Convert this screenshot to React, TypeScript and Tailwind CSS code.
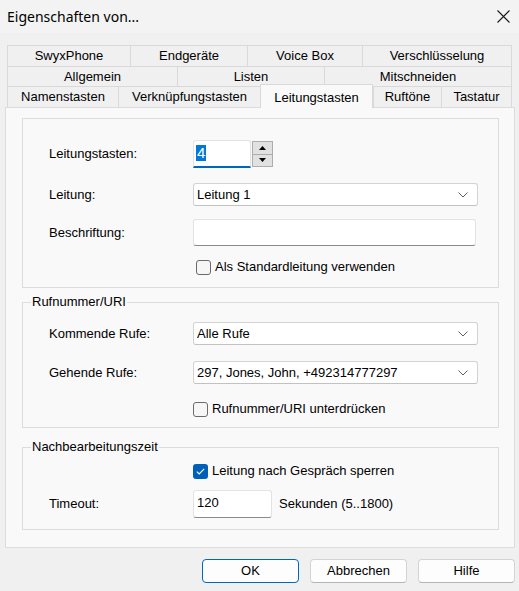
import { ReactNode } from "react";

type Tab = { label: string; width: string; active?: boolean };

const tabRows: { height: string; tabs: Tab[] }[] = [
  {
    height: "h-[21px]",
    tabs: [
      { label: "SwyxPhone", width: "w-[123px]" },
      { label: "Endgeräte", width: "w-[117px]" },
      { label: "Voice Box", width: "w-[115px]" },
      { label: "Verschlüsselung", width: "w-[150px]" },
    ],
  },
  {
    height: "h-[20px]",
    tabs: [
      { label: "Allgemein", width: "w-[170px]" },
      { label: "Listen", width: "w-[147px]" },
      { label: "Mitschneiden", width: "w-[188px]" },
    ],
  },
  {
    height: "h-[21px]",
    tabs: [
      { label: "Namenstasten", width: "w-[111px]" },
      { label: "Verknüpfungstasten", width: "w-[142px]" },
      { label: "Leitungstasten", width: "w-[113px]", active: true },
      { label: "Ruftöne", width: "w-[68px]" },
      { label: "Tastatur", width: "w-[71px]" },
    ],
  },
];

const Chevron = () => (
  <svg width="10" height="6" viewBox="0 0 10 6" fill="none">
    <path d="M0.5 0.5 L5 5 L9.5 0.5" stroke="#606060" strokeWidth="1" />
  </svg>
);

const Dropdown = ({ value, className }: { value: string; className?: string }) => (
  <div
    className={`flex h-[23px] w-[285px] items-center justify-between rounded-[3px] border border-[#d3d3d3] border-b-[#c2c2c2] bg-white pl-[3px] pr-[9px] ${className ?? ""}`}
  >
    <span>{value}</span>
    <Chevron />
  </div>
);

const Checkbox = ({ label, checked, className }: { label: string; checked?: boolean; className?: string }) => (
  <div className={`flex h-[16px] items-center gap-[4px] ${className ?? ""}`}>
    {checked ? (
      <span className="flex h-[15px] w-[15px] items-center justify-center rounded-[3px] bg-[#005fb8]">
        <svg width="9" height="7" viewBox="0 0 9 7" fill="none">
          <path d="M0.8 3.6 L3.2 6 L8.2 0.9" stroke="white" strokeWidth="1.1" />
        </svg>
      </span>
    ) : (
      <span className="h-[15px] w-[15px] rounded-[3px] border border-[#6b6b6b] bg-[#f6f6f6]" />
    )}
    <span>{label}</span>
  </div>
);

const Row = ({ label, children, className }: { label: string; children: ReactNode; className?: string }) => (
  <div className={`flex items-center ${className ?? ""}`}>
    <span className="w-[144px] shrink-0">{label}</span>
    {children}
  </div>
);

const Group = ({ title, children, className }: { title?: string; children: ReactNode; className?: string }) => (
  <div className={`relative ml-[16px] w-[477px] border border-[#dcdcdc] pl-[26px] ${className ?? ""}`}>
    {title && (
      <span className="absolute -top-[9px] left-[8px] bg-[#f9f9f9] px-[1px] leading-[15px]">{title}</span>
    )}
    {children}
  </div>
);

const Button = ({ label, primary }: { label: string; primary?: boolean }) => (
  <div
    className={`flex h-[24px] w-[97px] items-center justify-center rounded-[4px] border bg-[#fdfdfd] ${
      primary ? "border-[#0067c0]" : "border-[#d3d3d3] border-b-[#b5b5b5]"
    }`}
  >
    {label}
  </div>
);

export default function App() {
  return (
    <div className="h-[591px] w-[519px] overflow-hidden bg-[#f0f0f0] font-['Liberation_Sans',Arial,sans-serif] text-[13px] text-black">
      {/* title bar */}
      <div className="flex h-[33px] items-center justify-between bg-[#f3f3f3] pl-[7px] pr-[9px]">
        <span className="font-['Noto_Sans',sans-serif] text-[14px]">Eigenschaften von...</span>
        <svg width="13" height="13" viewBox="0 0 13 13" fill="none">
          <path d="M0.5 0.5 L12.5 12.5 M12.5 0.5 L0.5 12.5" stroke="#1a1a1a" strokeWidth="1.1" />
        </svg>
      </div>

      {/* tab strip */}
      <div className="mt-[12px] px-[7px]">
        {tabRows.map((row, i) => (
          <div key={i} className={`flex items-start ${row.height}`}>
            {row.tabs.map((tab, j) => (
              <div
                key={tab.label}
                className={
                  tab.active
                    ? `relative z-10 -mt-[2px] flex h-[24px] items-start justify-center border-x border-t border-[#d9d9d9] bg-[#f9f9f9] pt-[3px] ${tab.width}`
                    : `flex h-full items-center justify-center border-l border-t border-[#d9d9d9] bg-[#f0f0f0] ${tab.width} ${
                        j === row.tabs.length - 1 ? "border-r" : ""
                      }`
                }
              >
                {tab.label}
              </div>
            ))}
          </div>
        ))}
      </div>

      {/* page */}
      <div className="mx-[5px] w-[510px] border border-[#dcdcdc] bg-[#f9f9f9] pt-[10px] pb-[17px]">
        <Group className="pt-[21px] pb-[12px]">
          <Row label="Leitungstasten:">
            <div className="flex items-center">
              <div className="flex h-[28px] w-[58px] items-center rounded-t-[3px] border border-[#e3e3e3] border-b-2 border-b-[#0067c0] bg-white pb-[2px] pl-[2px]">
                <span className="bg-[#0078d7] px-[1px] text-[15px] leading-[16px] text-white">4</span>
              </div>
              <div className="ml-[1px] flex h-[26px] w-[21px] flex-col border border-[#adadad] bg-[#e1e1e1]">
                <div className="flex flex-1 items-center justify-center border-b border-[#adadad]">
                  <svg width="7" height="4" viewBox="0 0 7 4">
                    <path d="M0 4 L3.5 0 L7 4 Z" fill="#000" />
                  </svg>
                </div>
                <div className="flex flex-1 items-center justify-center">
                  <svg width="7" height="4" viewBox="0 0 7 4">
                    <path d="M0 0 L7 0 L3.5 4 Z" fill="#000" />
                  </svg>
                </div>
              </div>
            </div>
          </Row>
          <Row label="Leitung:" className="mt-[15px]">
            <Dropdown value="Leitung 1" />
          </Row>
          <Row label="Beschriftung:" className="mt-[13px]">
            <div className="h-[27px] w-[283px] rounded-[3px] border border-[#e3e3e3] border-b-[#8a8a8a] bg-white" />
          </Row>
          <Checkbox label="Als Standardleitung verwenden" className="mt-[13px] ml-[147px]" />
        </Group>

        <Group title="Rufnummer/URI" className="mt-[14px] pt-[19px] pb-[10px]">
          <Row label="Kommende Rufe:">
            <Dropdown value="Alle Rufe" />
          </Row>
          <Row label="Gehende Rufe:" className="mt-[16px]">
            <Dropdown value="297, Jones, John, +492314777297" />
          </Row>
          <Checkbox label="Rufnummer/URI unterdrücken" className="mt-[17px] ml-[144px]" />
        </Group>

        <Group title="Nachbearbeitungszeit" className="mt-[19px] pt-[15px] pb-[11px]">
          <Checkbox label="Leitung nach Gespräch sperren" checked className="ml-[144px]" />
          <Row label="Timeout:" className="mt-[11px]">
            <div className="flex h-[28px] w-[79px] items-center rounded-[3px] border border-[#e3e3e3] border-b-[#8a8a8a] bg-white pb-[3px] pl-[3px]">
              120
            </div>
            <span className="ml-[7px]">Sekunden (5..1800)</span>
          </Row>
        </Group>
      </div>

      {/* dialog buttons */}
      <div className="mt-[11px] flex justify-end gap-[11px] pr-[4px]">
        <Button label="OK" primary />
        <Button label="Abbrechen" />
        <Button label="Hilfe" />
      </div>
    </div>
  );
}
